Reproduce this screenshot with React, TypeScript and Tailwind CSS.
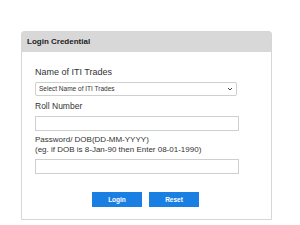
export default function App() {
  return (
    <div className="h-[225px] w-[300px] bg-white pt-[31px] font-['Liberation_Sans',Arial,sans-serif] text-[#333]">
      <div className="ml-[21px] w-[251px] h-[189px] rounded-t-[3px] border border-[#d6d6d6]">
        <div className="flex h-[20px] items-center bg-[#d8d8d8] px-[5px] text-[8px] font-bold text-[#222]">
          Login Credential
        </div>
        <div className="px-[13px] pt-[15px]">
          <div className="text-[9px] leading-[11px]">Name of ITI Trades</div>
          <div className="mt-[4px] flex h-[14px] w-[202px] items-center justify-between rounded-[2px] border border-[#cfcfcf] px-[3px] text-[6.5px]">
            <span>Select Name of ITI Trades</span>
            <svg width="6" height="4" viewBox="0 0 6 4">
              <path d="M1 1 L3 3 L5 1" stroke="#444" strokeWidth="1" fill="none" />
            </svg>
          </div>
          <div className="mt-[5px] text-[8.5px] leading-[11px]">Roll Number</div>
          <div className="mt-[4px] h-[15px] w-[204px] border border-[#cfcfcf]" />
          <div className="mt-[4px] text-[8px] leading-[9.5px]">
            Password/ DOB(DD-MM-YYYY)
            <br />
            (eg. if DOB is 8-Jan-90 then Enter 08-01-1990)
          </div>
          <div className="mt-[5px] h-[15px] w-[204px] border border-[#cfcfcf]" />
          <div className="mt-[18px] flex justify-center gap-[7px] pr-[2px]">
            <div className="flex h-[15px] w-[50px] items-center justify-center bg-[#1a7fe3] text-[6.5px] font-bold text-white">
              Login
            </div>
            <div className="flex h-[15px] w-[50px] items-center justify-center bg-[#1a7fe3] text-[6.5px] font-bold text-white">
              Reset
            </div>
          </div>
        </div>
      </div>
    </div>
  );
}
